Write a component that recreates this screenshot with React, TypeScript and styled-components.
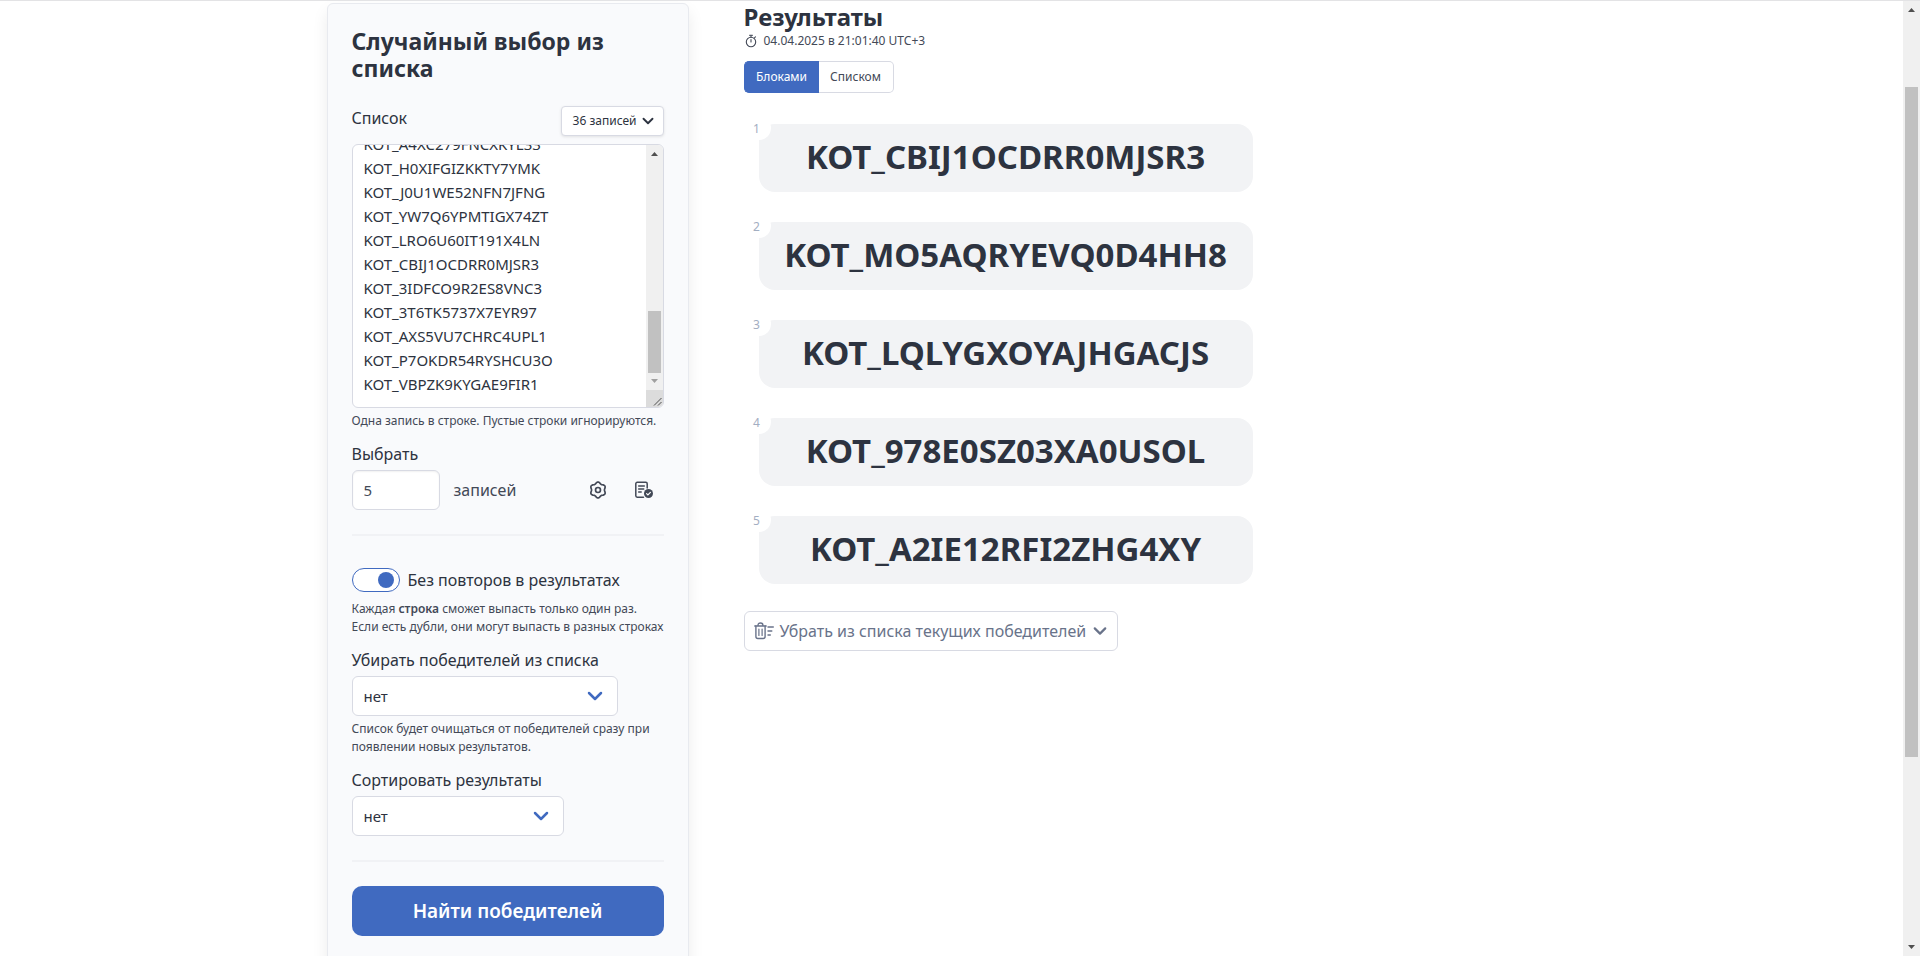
import { useLayoutEffect, useRef, useState } from 'react';
import styled, { createGlobalStyle } from 'styled-components';

const colors = {
  text: '#2d3340',
  body: '#434957',
  muted: '#69738a',
  faint: '#a3aec2',
  primary: '#406ac0',
  panel: '#f9fafc',
  card: '#f2f3f5',
  border: '#d8dae3',
};

const GlobalStyle = createGlobalStyle`
  *, *::before, *::after { box-sizing: border-box; }
  body {
    margin: 0;
    background: #fff;
    color: ${colors.text};
    font: 400 16px/24px 'Noto Sans', 'Open Sans', sans-serif;
  }
  button, input, select, textarea { font: inherit; color: inherit; margin: 0; }
  button, select { cursor: pointer; }
`;

const Window = styled.div`
  display: flex;
  height: 100vh;
  overflow: hidden;
  border-top: 1px solid #e3e3e5;
`;

const Page = styled.main`
  flex: 1;
  min-width: 0;
  overflow: hidden;
  padding-top: 2px;
`;

const Container = styled.div`
  display: grid;
  grid-template-columns: 362px minmax(0, 1fr);
  column-gap: 55px;
  align-items: start;
  max-width: 1250px;
  margin: 0 auto;
`;

/* Scroll bars */

const Bar = styled.div`
  display: flex;
  flex-direction: column;
  flex: none;
  width: 17px;
  background: #f0f0f0;
`;

const Arrow = styled.svg`
  flex: none;
  width: 17px;
  height: 17px;
`;

const Thumb = styled.div<{ $grow: number }>`
  flex: ${(p) => p.$grow} 0 0;
  margin: 0 2px;
  background: #c1c1c1;
`;

const Gap = styled.div<{ $grow: number }>`
  flex: ${(p) => p.$grow} 0 0;
`;

function ScrollBar({ before, thumb, after, corner }: {
  before: number; thumb: number; after: number; corner?: boolean;
}) {
  return (
    <Bar aria-hidden="true">
      <Arrow viewBox="0 0 17 17"><path d="M5 11h7L8.500 7z" fill="#4f4f4f" /></Arrow>
      <Gap $grow={before} />
      <Thumb $grow={thumb} />
      <Gap $grow={after} />
      <Arrow viewBox="0 0 17 17"><path d="M5 6h7L8.500 10z" fill={after ? '#4f4f4f' : '#a0a0a0'} /></Arrow>
      {corner && (
        <Arrow viewBox="0 0 17 17">
          <path d="M0 0h17v17H0z" fill="#dcdcdc" />
          <path d="M8 15.500L15.500 8M12 15.500L15.500 12" stroke="#4f4f4f" strokeWidth="1" />
        </Arrow>
      )}
    </Bar>
  );
}

/* Settings panel */

const Panel = styled.form`
  min-height: 1000px;
  padding: 24px;
  background: ${colors.panel};
  border: 1px solid #e8eaef;
  border-radius: 6px;
  box-shadow: 0 8px 16px rgba(0, 0, 0, 0.08);
`;

const Title = styled.h2<{ $size: number }>`
  margin: 0;
  font-size: ${(p) => p.$size}px;
  line-height: 27px;
  font-weight: 700;
`;

const Field = styled.div`
  display: flex;
  flex-direction: column;
  align-items: stretch;
  gap: 4px;
  margin-top: 12px;
`;

const ListField = styled(Field)`
  margin-top: 24px;
`;

const Label = styled.label`
  font-size: 16px;
  line-height: 24px;
`;

const LabelRow = styled.div`
  display: flex;
  justify-content: space-between;
  align-items: flex-start;
  margin-bottom: 4px;
`;

const Hint = styled.p`
  margin: 0;
  font-size: 12px;
  line-height: 18px;
  color: ${colors.body};
  white-space: nowrap;

  strong { font-weight: 600; }
`;

const CountButton = styled.button`
  display: flex;
  align-items: center;
  gap: 5px;
  height: 30px;
  padding: 0 9px 0 11px;
  background: #fff;
  border: 1px solid ${colors.border};
  border-radius: 4px;
  box-shadow: 0 1px 3px rgba(0, 0, 0, 0.1);
  font-size: 12px;
`;

const ListBox = styled.div`
  display: flex;
  height: 264px;
  overflow: hidden;
  background: #fff;
  border: 1px solid ${colors.border};
  border-radius: 6px;
`;

const ListArea = styled.textarea`
  flex: 1;
  min-width: 0;
  padding: 9px 11px 11px;
  border: 0;
  outline: 0;
  background: none;
  resize: none;
  font-size: 15px;
  line-height: 24px;
  white-space: pre;
  overflow: auto;
  scrollbar-width: none;
`;

const PickRow = styled.div`
  display: flex;
  align-items: center;
  color: ${colors.body};
`;

const NumberInput = styled.input`
  width: 88px;
  height: 40px;
  margin-right: 14px;
  padding: 0 11px;
  background: #fff;
  border: 1px solid ${colors.border};
  border-radius: 6px;
  box-shadow: inset 0 1px 2px rgba(0, 0, 0, 0.06);
  font-size: 15px;
  appearance: textfield;

  &::-webkit-inner-spin-button { appearance: none; }
`;

const PickTools = styled.div`
  display: flex;
  gap: 28px;
  margin-left: auto;
  margin-right: 11px;
`;

const IconButton = styled.button`
  display: flex;
  padding: 0;
  border: 0;
  background: none;
`;

const Divider = styled.hr`
  height: 2px;
  margin: 24px 0;
  border: 0;
  background: #f1f2f5;
`;

const ToggleField = styled(Field)`
  margin-top: 32px;
  gap: 8px;
`;

const ToggleLabel = styled.label`
  display: flex;
  align-items: center;
  gap: 8px;
  height: 24px;
  white-space: nowrap;
  cursor: pointer;
`;

const Toggle = styled.input`
  appearance: none;
  display: flex;
  align-items: center;
  flex: none;
  width: 48px;
  height: 24px;
  padding: 0 5px;
  background: #fff;
  border: 1px solid ${colors.primary};
  border-radius: 12px;
  cursor: pointer;

  &::before {
    content: '';
    width: 16px;
    height: 16px;
    border-radius: 50%;
    background: ${colors.primary};
  }
  &:checked { justify-content: flex-end; }
`;

const SelectBox = styled.div<{ $width: number }>`
  display: grid;
  align-items: center;
  width: ${(p) => p.$width}px;
  max-width: 100%;

  > * { grid-area: 1 / 1; }
  > svg { justify-self: end; margin-right: 15px; pointer-events: none; }
`;

const Select = styled.select`
  appearance: none;
  width: 100%;
  height: 40px;
  padding: 0 11px;
  background: #fff;
  border: 1px solid ${colors.border};
  border-radius: 6px;
  font-size: 15px;
`;

const Submit = styled.button`
  width: 100%;
  height: 50px;
  border: 0;
  border-radius: 10px;
  background: ${colors.primary};
  color: #fff;
  font-size: 19px;
  font-weight: 600;
`;

/* Results */

const Results = styled.section`
  display: flex;
  flex-direction: column;
  align-items: flex-start;
`;

const Stamp = styled.div`
  display: flex;
  align-items: center;
  gap: 7px;
  margin: 2px 0 11px;
  padding-left: 1px;
  font-size: 12px;
  line-height: 18px;
  color: ${colors.body};
`;

const Tabs = styled.div`
  display: flex;
`;

const Tab = styled.button<{ $active: boolean }>`
  width: 75px;
  height: 32px;
  padding: 0;
  border: 1px solid ${(p) => (p.$active ? colors.primary : colors.border)};
  background: ${(p) => (p.$active ? colors.primary : '#fff')};
  color: ${(p) => (p.$active ? '#fff' : colors.body)};
  font-size: 12px;

  &:first-child { border-radius: 5px 0 0 5px; border-right: 0; }
  &:last-child { border-radius: 0 5px 5px 0; border-left: 0; }
`;

const Cards = styled.ol`
  display: flex;
  flex-direction: column;
  gap: 30px;
  margin: 31px 0 27px;
  padding: 0 0 0 15px;
  list-style: none;
`;

const Card = styled.li`
  position: relative;
  min-width: 494px;
  padding: 11px 24px 13px;
  border-radius: 16px;
  background: ${colors.card};
  font-size: 33px;
  line-height: 44px;
  font-weight: 700;
  text-align: center;
`;

const Place = styled.span`
  position: absolute;
  top: -8px;
  left: -12px;
  width: 24px;
  height: 24px;
  border-radius: 50%;
  background: #fff;
  color: ${colors.faint};
  font-size: 12px;
  line-height: 26px;
  font-weight: 400;
  padding-right: 4px;
`;

const RemoveButton = styled.button`
  display: flex;
  align-items: center;
  height: 40px;
  padding: 0 10px 0 9px;
  background: #fff;
  border: 1px solid ${colors.border};
  border-radius: 6px;
  color: ${colors.muted};
  font-size: 16px;

  > span { margin: 0 7px 0 6px; }
`;

/* Icons */

function Chevron({ size, color }: { size: number; color: string }) {
  return (
    <svg width={size} height={size} viewBox="0 0 16 16" fill="none" stroke={color} strokeWidth="2.500" strokeLinecap="round" strokeLinejoin="round" aria-hidden="true">
      <path d="M2 5l6 6 6-6" />
    </svg>
  );
}

const gearPoints = Array.from({ length: 72 }, (_, i) => {
  const a = (i * Math.PI) / 36;
  const r = 6.4 + 0.7 * Math.cos(6 * a);
  return `${(8 + r * Math.sin(a)).toFixed(2)},${(8 - r * Math.cos(a)).toFixed(2)}`;
}).join(' ');

function GearIcon() {
  return (
    <svg width="18" height="18" viewBox="0 0 16 16" fill="none" stroke={colors.body} strokeWidth="1.500" strokeLinejoin="round" aria-hidden="true">
      <polygon points={gearPoints} />
      <circle cx="8" cy="8" r="2.200" />
    </svg>
  );
}

function ReportIcon() {
  return (
    <svg width="18" height="18" viewBox="0 0 18 18" fill="none" stroke={colors.body} strokeWidth="1.500" strokeLinecap="round" aria-hidden="true">
      <path d="M8.500 16.200H2.200a1.400 1.400 0 0 1-1.400-1.400V2.700a1.400 1.400 0 0 1 1.400-1.400h8.600a1.400 1.400 0 0 1 1.400 1.400V7" />
      <path d="M3.700 5h5.600M3.700 8h5M3.700 11h2.500" />
      <circle cx="13.500" cy="12.500" r="4.500" fill={colors.body} stroke="none" />
      <path d="M11.600 12.600l1.300 1.300 2.500-2.500" stroke="#fff" strokeWidth="1.200" />
    </svg>
  );
}

function StopwatchIcon() {
  return (
    <svg width="12" height="14" viewBox="0 0 12 14" fill="none" stroke={colors.body} strokeWidth="1.100" strokeLinecap="round" aria-hidden="true">
      <circle cx="6" cy="8" r="4.700" />
      <path d="M4.500 1.200h3M6 1.200v2M6 5.500V8M9.600 3.700l.900-.800" />
    </svg>
  );
}

function TrashListIcon() {
  return (
    <svg width="20" height="18" viewBox="0 0 20 18" fill="none" stroke={colors.muted} strokeWidth="1.400" strokeLinecap="round" strokeLinejoin="round" aria-hidden="true">
      <path d="M.8 4h11.400M4 3.500c0-2 1-2.500 2.500-2.500S9 1.500 9 3.500" />
      <path d="M1.900 4v10.500a2 2 0 0 0 2 2h5.200a2 2 0 0 0 2-2V4" />
      <path d="M4.900 7v6.500M8.100 7v6.500" strokeWidth="1.200" />
      <path d="M14 5h5.300M14 9h3.800M14 13h2.300" />
    </svg>
  );
}

const entries = [
  'KOT_A4XC279FNCXKYL33',
  'KOT_H0XIFGIZKKTY7YMK',
  'KOT_J0U1WE52NFN7JFNG',
  'KOT_YW7Q6YPMTIGX74ZT',
  'KOT_LRO6U60IT191X4LN',
  'KOT_CBIJ1OCDRR0MJSR3',
  'KOT_3IDFCO9R2ES8VNC3',
  'KOT_3T6TK5737X7EYR97',
  'KOT_AXS5VU7CHRC4UPL1',
  'KOT_P7OKDR54RYSHCU3O',
  'KOT_VBPZK9KYGAE9FIR1',
];

const winners = [
  'KOT_CBIJ1OCDRR0MJSR3',
  'KOT_MO5AQRYEVQ0D4HH8',
  'KOT_LQLYGXOYAJHGACJS',
  'KOT_978E0SZ03XA0USOL',
  'KOT_A2IE12RFI2ZHG4XY',
];

export default function App() {
  const list = useRef<HTMLTextAreaElement>(null);
  const [view, setView] = useState('Блоками');

  useLayoutEffect(() => {
    if (list.current) list.current.scrollTop = list.current.scrollHeight;
  }, []);

  return (
    <Window>
      <GlobalStyle />
      <Page>
        <Container>
          <Panel onSubmit={(e) => e.preventDefault()}>
            <Title $size={23}>Случайный выбор из списка</Title>
            <ListField>
              <LabelRow>
                <Label htmlFor="list">Список</Label>
                <CountButton type="button">
                  36 записей
                  <Chevron size={12} color={colors.text} />
                </CountButton>
              </LabelRow>
              <ListBox>
                <ListArea id="list" ref={list} defaultValue={entries.join('\n')} spellCheck={false} />
                <ScrollBar before={149} thumb={62} after={0} corner />
              </ListBox>
              <Hint>Одна запись в строке. Пустые строки игнорируются.</Hint>
            </ListField>
            <Field>
              <Label htmlFor="amount">Выбрать</Label>
              <PickRow>
                <NumberInput id="amount" type="number" defaultValue={5} />
                записей
                <PickTools>
                  <IconButton type="button" aria-label="Настройки"><GearIcon /></IconButton>
                  <IconButton type="button" aria-label="Протокол"><ReportIcon /></IconButton>
                </PickTools>
              </PickRow>
            </Field>
            <Divider />
            <ToggleField>
              <ToggleLabel>
                <Toggle type="checkbox" defaultChecked />
                Без повторов в результатах
              </ToggleLabel>
              <Hint>
                Каждая <strong>строка</strong> сможет выпасть только один раз.
                <br />
                Если есть дубли, они могут выпасть в разных строках
              </Hint>
            </ToggleField>
            <Field>
              <Label htmlFor="remove">Убирать победителей из списка</Label>
              <SelectBox $width={266}>
                <Select id="remove"><option>нет</option></Select>
                <Chevron size={16} color={colors.primary} />
              </SelectBox>
              <Hint>
                Список будет очищаться от победителей сразу при
                <br />
                появлении новых результатов.
              </Hint>
            </Field>
            <Field>
              <Label htmlFor="sort">Сортировать результаты</Label>
              <SelectBox $width={212}>
                <Select id="sort"><option>нет</option></Select>
                <Chevron size={16} color={colors.primary} />
              </SelectBox>
            </Field>
            <Divider />
            <Submit type="submit">Найти победителей</Submit>
          </Panel>
          <Results>
            <Title $size={24}>Результаты</Title>
            <Stamp>
              <StopwatchIcon />
              04.04.2025 в 21:01:40 UTC+3
            </Stamp>
            <Tabs>
              {['Блоками', 'Списком'].map((name) => (
                <Tab key={name} type="button" $active={view === name} onClick={() => setView(name)}>{name}</Tab>
              ))}
            </Tabs>
            <Cards>
              {winners.map((name, i) => (
                <Card key={name}>
                  <Place>{i + 1}</Place>
                  {name}
                </Card>
              ))}
            </Cards>
            <RemoveButton type="button">
              <TrashListIcon />
              <span>Убрать из списка текущих победителей</span>
              <Chevron size={14} color={colors.muted} />
            </RemoveButton>
          </Results>
        </Container>
      </Page>
      <ScrollBar before={69} thumb={670} after={182} />
    </Window>
  );
}
